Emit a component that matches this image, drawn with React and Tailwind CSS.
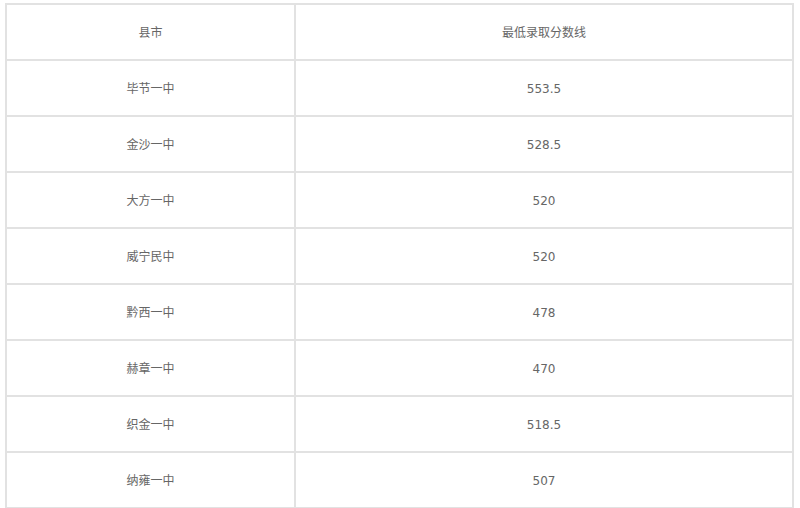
const rows = [
  ['毕节一中', '553.5'],
  ['金沙一中', '528.5'],
  ['大方一中', '520'],
  ['威宁民中', '520'],
  ['黔西一中', '478'],
  ['赫章一中', '470'],
  ['织金一中', '518.5'],
  ['纳雍一中', '507'],
];

export default function App() {
  return (
    <div
      className="h-[508px] w-[800px] overflow-hidden bg-white pl-[5px] pt-[3px] text-[12px] text-[#666]"
      style={{ fontFamily: '"DejaVu Sans", "Noto Sans CJK SC", sans-serif' }}
    >
      <table className="w-[789px] border-collapse text-center">
        <tbody>
          <tr>
            <td className="h-[56px] w-[289px] border-2 border-[#e2e2e2] pt-[2px]">县市</td>
            <td className="h-[56px] border-2 border-[#e2e2e2] pt-[2px]">最低录取分数线</td>
          </tr>
          {rows.map(([name, score]) => (
            <tr key={name}>
              <td className="h-[56px] border-2 border-[#e2e2e2] pt-[2px]">{name}</td>
              <td className="h-[56px] border-2 border-[#e2e2e2] pt-[2px]">{score}</td>
            </tr>
          ))}
        </tbody>
      </table>
    </div>
  );
}
